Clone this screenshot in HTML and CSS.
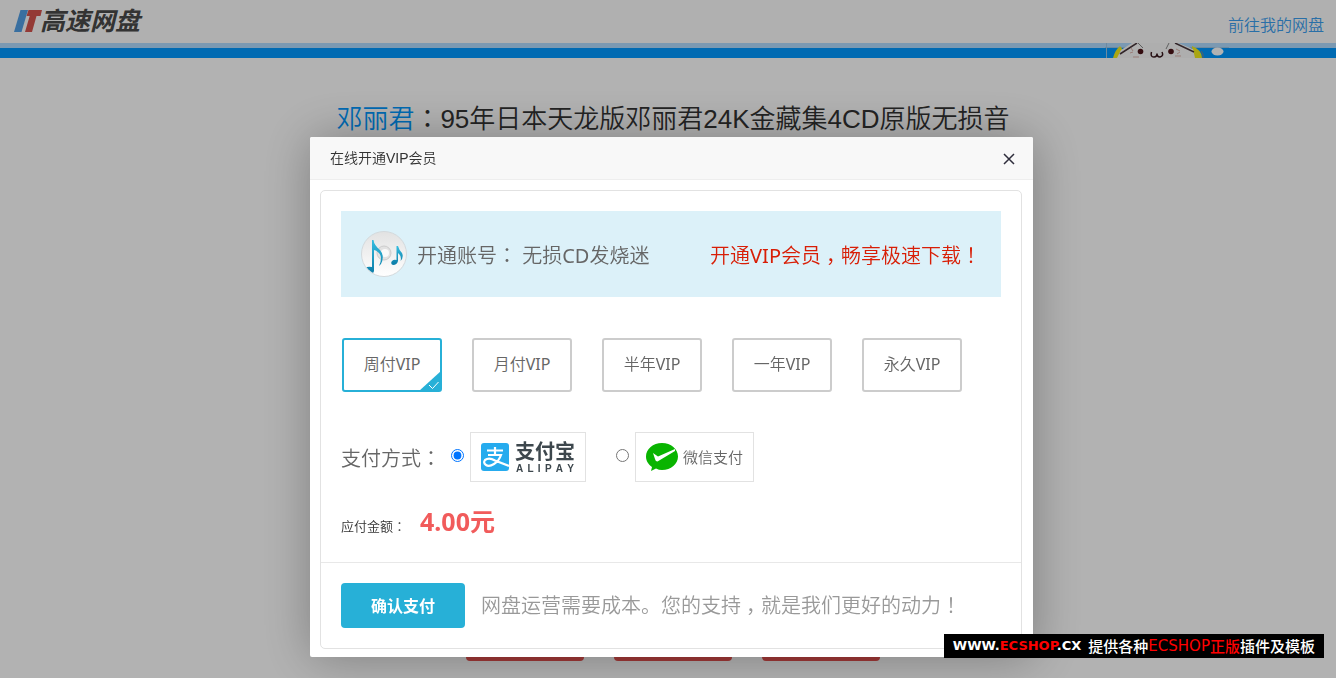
FILE: index.html
```html
<!DOCTYPE html>
<html lang="zh-CN">
<head>
<meta charset="utf-8">
<title>高速网盘</title>
<link rel="stylesheet" href="styles.css">
</head>
<body>
<header class="header">
  <a class="logo" href="#">
    <svg class="logo-mark" viewBox="0 0 28 22" aria-hidden="true">
      <path d="M6.500 0H14L7.500 22H0Z" fill="#529fe6"/>
      <path d="M14.500 0H28L26.500 6H22.500L18 22H11L15.700 6H12.500Z" fill="#d4534e"/>
    </svg>
    <span>高速网盘</span>
  </a>
  <a class="my-disk" href="#">前往我的网盘</a>
</header>
<div class="stripe">
  <svg class="mascot" viewBox="0 0 124 15" aria-hidden="true">
    <path d="M1.500 0V15M0 4.500H124" stroke="#9cc6e6" fill="none"/>
    <path d="M8 15Q10 7 15 3L20 10L14 15Z" fill="#f4ee1c"/>
    <path d="M87 3Q97 7 97 15H88Z" fill="#f4ee1c"/>
    <path d="M12 15L16 7L27 0H73L88 6L90 15Z" fill="#fafafa"/>
    <path d="M15 11L32 0M70 0L89 9" stroke="#48363c" stroke-width="1.500" fill="none"/>
    <path d="M33 0L38 5M64 0L61 6M96 8Q99 11 98 15" stroke="#888" fill="none"/>
    <circle cx="35.500" cy="8.500" r="2.800" fill="#4b1418"/>
    <circle cx="66" cy="8.500" r="2.800" fill="#4b1418"/>
    <path d="M46.500 9Q45 14 49 14Q52 14 52 10.500Q52 14 55 14Q59 13 57 9" stroke="#35151a" stroke-width="1.500" fill="none"/>
    <path d="M26 5L28 8M25 10L28 9M28 14H34M71 6L75 8M72 11L75 9M70 13H76" stroke="#ddb3ac" fill="none"/>
    <ellipse cx="112.500" cy="8.500" rx="6" ry="4" fill="#fff"/>
  </svg>
</div>
<main class="page">
  <h1 class="title"><a href="#">邓丽君</a><span class="mid" lang="zh-TW">：</span>95年日本天龙版邓丽君24K金藏集4CD原版无损音</h1>
  <div class="actions">
    <button type="button" class="action"></button>
    <button type="button" class="action"></button>
    <button type="button" class="action"></button>
  </div>
</main>

<div class="overlay">
  <section class="dialog" role="dialog" aria-labelledby="dialog-title">
    <div class="dialog-head">
      <h2 id="dialog-title">在线开通VIP会员</h2>
      <button type="button" class="close" aria-label="关闭">
        <svg viewBox="0 0 12 12" aria-hidden="true"><path d="M1 1L11 11M11 1L1 11" stroke="#2e2d3c" stroke-width="1.500"/></svg>
      </button>
    </div>
    <form class="panel">
      <div class="panel-body">
        <div class="banner">
          <svg class="avatar" viewBox="0 0 46 46" aria-hidden="true">
            <defs>
              <linearGradient id="disc" x1="0" y1="0" x2="0" y2="1"><stop offset="0" stop-color="#e2e2e2"/><stop offset="1" stop-color="#fff"/></linearGradient>
              <linearGradient id="note" x1="0" y1="0" x2="0" y2="1"><stop offset="0" stop-color="#35bde0"/><stop offset="1" stop-color="#0b7ba6"/></linearGradient>
              <clipPath id="round"><circle cx="23" cy="23" r="22"/></clipPath>
            </defs>
            <circle cx="23" cy="23" r="22.500" fill="url(#disc)" stroke="#d3d9dc"/>
            <circle cx="23" cy="22" r="7" fill="#e2e2e2" stroke="#ccc"/>
            <circle cx="24" cy="22" r="4" fill="#fafafa"/>
            <g clip-path="url(#round)" fill="url(#note)">
              <path d="M11 9H12.500Q13 14 19 19Q24 25 20 33L18 35Q22 26 18 22Q15 19 13 19V40Q12 44 6 43Q2 41 4 37Q7 35 11 36Z"/>
              <path d="M35.500 15H37Q38 19 41 22Q43 26 39.500 30Q41 25 37 22V30Q36 34 32 34Q29 33 31 30Q33 28 35.500 29Z"/>
            </g>
          </svg>
          <p class="account">开通账号<span class="mid" lang="zh-TW">：</span> 无损<span class="latin">CD</span>发烧迷</p>
          <p class="promo">开通<span class="latin">VIP</span>会员<span class="comma">，</span>畅享极速下载<span class="mid" lang="zh-TW">！</span></p>
        </div>
        <div class="plans">
          <button type="button" class="plan selected">周付<span class="latin">VIP</span>
            <svg class="tick" viewBox="0 0 22 20" aria-hidden="true"><path d="M22 0V20H0Z" fill="#27b0d7"/><path d="M10 14L13.500 17.500L19.500 11" stroke="#fff" fill="none"/></svg>
          </button>
          <button type="button" class="plan">月付<span class="latin">VIP</span></button>
          <button type="button" class="plan">半年<span class="latin">VIP</span></button>
          <button type="button" class="plan">一年<span class="latin">VIP</span></button>
          <button type="button" class="plan">永久<span class="latin">VIP</span></button>
        </div>
        <div class="methods">
          <span class="methods-label">支付方式<span class="mid" lang="zh-TW">：</span></span>
          <div class="method">
            <input type="radio" name="pay" id="alipay" checked>
            <label class="pay-box" for="alipay">
              <svg class="alipay-icon" viewBox="0 0 28 28" aria-hidden="true">
                <rect width="28" height="28" rx="3" fill="#26abee"/>
                <path d="M6 7.500H22M14 4V12M7 12H20Q18 18 13 21Q8 24 5 22Q2 20 4 17Q8 14 14 17.500L28 23" stroke="#fff" stroke-width="2.200" fill="none"/>
              </svg>
              <span class="alipay-name">
                <span class="alipay-cn">支付宝</span>
                <span class="alipay-en"><span>A</span><span>L</span><span>I</span><span>P</span><span>A</span><span>Y</span></span>
              </span>
            </label>
          </div>
          <div class="method">
            <input type="radio" name="pay" id="wechat">
            <label class="pay-box" for="wechat">
              <svg class="wechat-icon" viewBox="0 0 32 28" aria-hidden="true">
                <path d="M16 0C7 0 0 6 0 13.500C0 18 2.500 21.500 6 24L5 28L10 25.500Q13 27 16 27C25 27 32 21 32 13.500C32 6 25 0 16 0Z" fill="#09b400"/>
                <path d="M7 10L12 13.500L29 6V8L11.500 18.500Q9.500 18.500 9 16Z" fill="#fff"/>
              </svg>
              <span class="wechat-name">微信支付</span>
            </label>
          </div>
        </div>
        <p class="amount">应付金额<span class="mid" lang="zh-TW">：</span><strong>4.00元</strong></p>
      </div>
      <div class="panel-foot">
        <button type="submit" class="confirm">确认支付</button>
        <span class="thanks">网盘运营需要成本。您的支持<span class="comma">，</span>就是我们更好的动力<span class="mid" lang="zh-TW">！</span></span>
      </div>
    </form>
  </section>
</div>
<div class="watermark"><b>WWW.<em>ECSHOP</em>.CX</b> <span>提供各种</span><i>ECSHOP</i><span><em>正版</em>插件及模板</span></div>
</body>
</html>
```
FILE: styles.css
```css
* { box-sizing: border-box; }
body {
  margin: 0;
  min-height: 100vh;
  overflow: hidden;
  background: #fff;
  color: #333;
  font-family: "Noto Sans", "Noto Sans CJK SC", sans-serif;
  font-weight: 350;
}
h1, h2, p { margin: 0; font-weight: 350; }
a { text-decoration: none; }
button { font: inherit; cursor: pointer; }
em, i { font-style: normal; }
.mid { font-family: "Noto Sans CJK TC", sans-serif; }
/* half-width comma with side padding, so it sits mid-cell */
.comma { padding: 0 5px; font-feature-settings: "halt"; }
.latin { font-weight: 400; }

.header {
  display: flex;
  justify-content: space-between;
  height: 43px;
  padding: 0 12px 0 14px;
  background: #fcfcfc;
}
.logo {
  display: flex;
  align-items: flex-start;
  color: #4a4a4a;
  font: italic 700 25px/38px "Noto Sans CJK SC", sans-serif;
}
.logo-mark { width: 28px; height: 22px; margin: 10px -2px 0 0; }
.my-disk { padding-top: 13px; color: #3b9ff0; font-size: 16px; line-height: 24px; }
.stripe {
  display: flex;
  justify-content: flex-end;
  height: 15px;
  padding-right: 107px;
  background: linear-gradient(#b0dcff 5px, #0098ff 5px);
}
.mascot { width: 124px; height: 15px; }

.page { padding: 40px 0 0 10px; }
.title {
  text-align: center;
  white-space: nowrap;
  font-family: "Liberation Sans", "Noto Sans CJK SC", sans-serif;
  font-size: 26px;
  line-height: 38px;
}
.title a { color: #0098ff; }
.actions { display: flex; justify-content: center; gap: 30px; padding-top: 479px; }
.action { width: 118px; height: 44px; border: 0; border-radius: 4px; background: #e4504e; }

.overlay {
  position: fixed;
  inset: 0;
  display: flex;
  justify-content: center;
  align-items: flex-start;
  padding: 137px 0 0 7px;
  background: rgba(0, 0, 0, .3);
}
.dialog {
  width: 723px;
  padding-bottom: 8px;
  border-radius: 2px;
  background: #fff;
  box-shadow: 1px 1px 50px rgba(0, 0, 0, .3);
}
.dialog-head {
  display: flex;
  justify-content: space-between;
  align-items: center;
  height: 43px;
  padding: 0 18px 0 20px;
  border-bottom: 1px solid #eee;
  border-radius: 2px 2px 0 0;
  background: #f8f8f8;
}
.dialog-head h2 {
  font-family: "Liberation Sans", "Noto Sans CJK SC", sans-serif;
  font-size: 14px;
  line-height: 42px;
}
.close { display: flex; padding: 2px 0 0; border: 0; background: none; }
.close svg { width: 12px; height: 12px; }

.panel { margin: 10px 11px 0 10px; border: 1px solid #e2e2e2; border-radius: 5px; color: #666; }
.panel-body { padding: 20px 20px 16px; }
.banner {
  display: flex;
  align-items: center;
  height: 86px;
  padding: 0 20px;
  background: #dcf1f9;
  font-size: 20px;
}
.avatar { width: 46px; height: 46px; margin-right: 10px; }
.promo { margin-left: auto; color: #d81e06; }

.plans { display: flex; gap: 30px; padding: 41px 1px 40px; }
.plan {
  position: relative;
  width: 100px;
  height: 54px;
  padding: 0 0 4px;
  border: 2px solid #ccc;
  border-radius: 3px;
  background: #fff;
  color: #666;
  font-size: 16px;
}
.plan.selected { border-color: #27b0d7; }
.tick { position: absolute; right: -1px; bottom: -1px; width: 22px; height: 20px; }

.methods { display: flex; align-items: center; gap: 30px; }
.methods-label { margin-right: -20px; font-size: 20px; }
.method { display: flex; align-items: center; gap: 6px; }
.method input { width: 13px; height: 13px; margin: 0 0 4px; }
.pay-box { display: flex; align-items: center; height: 50px; padding: 0 10px; border: 1px solid #e2e2e2; }
.alipay-icon { width: 28px; height: 28px; margin-right: 6px; }
.alipay-name { width: 60px; padding-top: 2px; color: #3d474d; }
.alipay-cn {
  display: block;
  font: 700 20px/21px "Liberation Sans", "Noto Sans CJK SC", sans-serif;
}
.alipay-en {
  display: flex;
  justify-content: space-between;
  padding: 1px 1px 0;
  font: 700 10px/10px "Liberation Sans", sans-serif;
}
.wechat-icon { width: 32px; height: 28px; margin-right: 5px; }
.wechat-name { font: 350 15px/24px "Noto Sans CJK SC", sans-serif; color: #666; }

.amount { padding-top: 19px; color: #333; font-size: 13px; line-height: 40px; }
.amount strong { margin-left: 14px; color: #f15b5b; font-size: 25px; font-weight: 700; }

.panel-foot {
  display: flex;
  align-items: center;
  gap: 16px;
  padding: 20px;
  border-top: 1px solid #e8e8e8;
}
.confirm {
  width: 124px;
  height: 45px;
  padding: 0 0 1px;
  border: 0;
  border-radius: 4px;
  background: #27b0d7;
  color: #fff;
  font-size: 16px;
  font-weight: 700;
}
.thanks { padding-bottom: 2px; color: #999; font-size: 20px; }

.watermark {
  position: fixed;
  right: 12px;
  bottom: 20px;
  display: flex;
  align-items: center;
  height: 24px;
  padding: 0 9px;
  background: #000;
  color: #fff;
  font: 500 15px/24px "Noto Sans CJK SC", sans-serif;
}
.watermark b { margin-right: 7px; font: 700 13px/24px "DejaVu Sans", sans-serif; }
.watermark i { font: 400 15px/24px "DejaVu Sans", sans-serif; }
.watermark em, .watermark i { color: #f00; }
```
